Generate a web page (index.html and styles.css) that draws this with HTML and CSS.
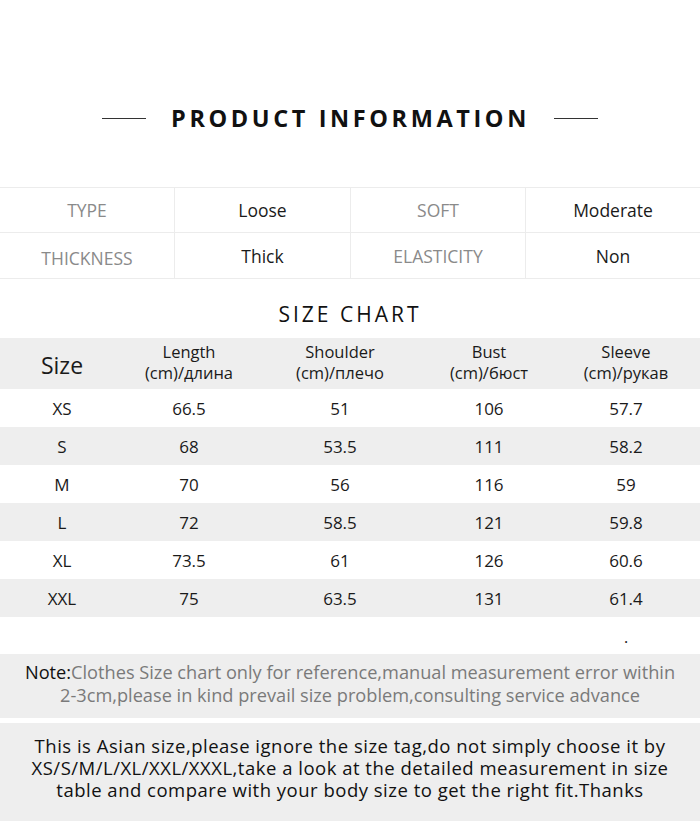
FILE: index.html
```html
<!DOCTYPE html>
<html>
<head>
<meta charset="utf-8">
<link rel="stylesheet" href="styles.css">
</head>
<body>
<div class="page">
  <header class="hero">
    <span class="rule"></span>
    <h1 class="hero-title">PRODUCT INFORMATION</h1>
    <span class="rule"></span>
  </header>

  <div class="spec">
    <div class="spec-cell label">TYPE</div>
    <div class="spec-cell value">Loose</div>
    <div class="spec-cell label">SOFT</div>
    <div class="spec-cell value">Moderate</div>
    <div class="spec-cell label low">THICKNESS</div>
    <div class="spec-cell value">Thick</div>
    <div class="spec-cell label">ELASTICITY</div>
    <div class="spec-cell value">Non</div>
  </div>

  <h2 class="size-title">SIZE CHART</h2>

  <div class="size-table">
    <div class="row head">
      <div class="cell size-head">Size</div>
      <div class="cell">Length<br>(cm)/длина</div>
      <div class="cell">Shoulder<br>(cm)/плечо</div>
      <div class="cell">Bust<br>(cm)/бюст</div>
      <div class="cell">Sleeve<br>(cm)/рукав</div>
    </div>
    <div class="row"><div class="cell">XS</div><div class="cell">66.5</div><div class="cell">51</div><div class="cell">106</div><div class="cell">57.7</div></div>
    <div class="row alt"><div class="cell">S</div><div class="cell">68</div><div class="cell">53.5</div><div class="cell">111</div><div class="cell">58.2</div></div>
    <div class="row"><div class="cell">M</div><div class="cell">70</div><div class="cell">56</div><div class="cell">116</div><div class="cell">59</div></div>
    <div class="row alt"><div class="cell">L</div><div class="cell">72</div><div class="cell">58.5</div><div class="cell">121</div><div class="cell">59.8</div></div>
    <div class="row"><div class="cell">XL</div><div class="cell">73.5</div><div class="cell">61</div><div class="cell">126</div><div class="cell">60.6</div></div>
    <div class="row alt"><div class="cell">XXL</div><div class="cell">75</div><div class="cell">63.5</div><div class="cell">131</div><div class="cell">61.4</div></div>
    <div class="row blank"><div class="cell"></div><div class="cell"></div><div class="cell"></div><div class="cell"></div><div class="cell dot">.</div></div>
  </div>

  <p class="note"><span class="note-key">Note:</span>Clothes Size chart only for reference,manual measurement error within<br>2-3cm,please in kind prevail size problem,consulting service advance</p>

  <p class="asian">This is Asian size,please ignore the size tag,do not simply choose it by<br>XS/S/M/L/XL/XXL/XXXL,take a look at the detailed measurement in size<br>table and compare with your body size to get the right fit.Thanks</p>
</div>
</body>
</html>
```

FILE: styles.css
```css
* { box-sizing: border-box; }
html, body { margin: 0; padding: 0; background: #fff; }
body {
  font-family: "Open Sans", "Noto Sans", sans-serif;
  color: #1a1a1a;
}
.page { width: 700px; }

.hero {
  height: 187px;
  padding-top: 103px;
  display: flex;
  justify-content: center;
  align-items: flex-start;
}
.rule {
  display: block;
  width: 44px;
  height: 1px;
  background: #333;
  margin-top: 15px;
}
.hero-title {
  margin: 0 24px 0 25px;
  font-size: 23.5px;
  line-height: 30px;
  font-weight: 700;
  letter-spacing: 3.6px;
  color: #111;
}

.spec {
  display: grid;
  grid-template-columns: 175px 176px 175px 174px;
  grid-template-rows: 45px 46px;
  border-top: 1px solid #ececec;
}
.spec-cell {
  display: flex;
  align-items: center;
  justify-content: center;
  border-bottom: 1px solid #ececec;
  border-right: 1px solid #ececec;
  font-size: 17.5px;
}
.spec-cell:nth-child(4n) { border-right: none; }
.spec-cell.label { color: #8a8a8a; }
.spec-cell.value { color: #1a1a1a; }
.spec-cell.low { padding-top: 5px; }

.size-title {
  margin: 0;
  height: 59px;
  padding-top: 22px;
  text-align: center;
  font-size: 21px;
  line-height: 26px;
  font-weight: 400;
  letter-spacing: 3px;
  color: #111;
}

.size-table { display: flex; flex-direction: column; }
.row {
  display: grid;
  grid-template-columns: 124px 130px 172px 126px 148px;
  height: 38px;
}
.row.head { height: 51px; background: #eeeeee; }
.row.alt { background: #eeeeee; }
.row.blank { height: 37px; }
.cell {
  display: flex;
  align-items: center;
  justify-content: center;
  text-align: center;
  font-size: 17px;
  line-height: 21px;
  color: #1a1a1a;
}
.row.head .cell { font-size: 16.5px; line-height: 21px; padding-bottom: 3px; }
.row.head .size-head { font-size: 23px; padding-top: 4px; padding-bottom: 0; }
.dot { font-size: 16px; padding-top: 4px; }

.note {
  margin: 0;
  height: 64px;
  padding-top: 7px;
  background: #eeeeee;
  text-align: center;
  font-size: 18.2px;
  line-height: 23px;
  color: #7a7a7a;
}
.note-key { color: #111; }

.asian {
  margin: 5px 0 0;
  height: 98px;
  padding-top: 12px;
  background: #eeeeee;
  text-align: center;
  font-size: 18.5px;
  line-height: 22px;
  letter-spacing: 0.5px;
  color: #111;
}
```
